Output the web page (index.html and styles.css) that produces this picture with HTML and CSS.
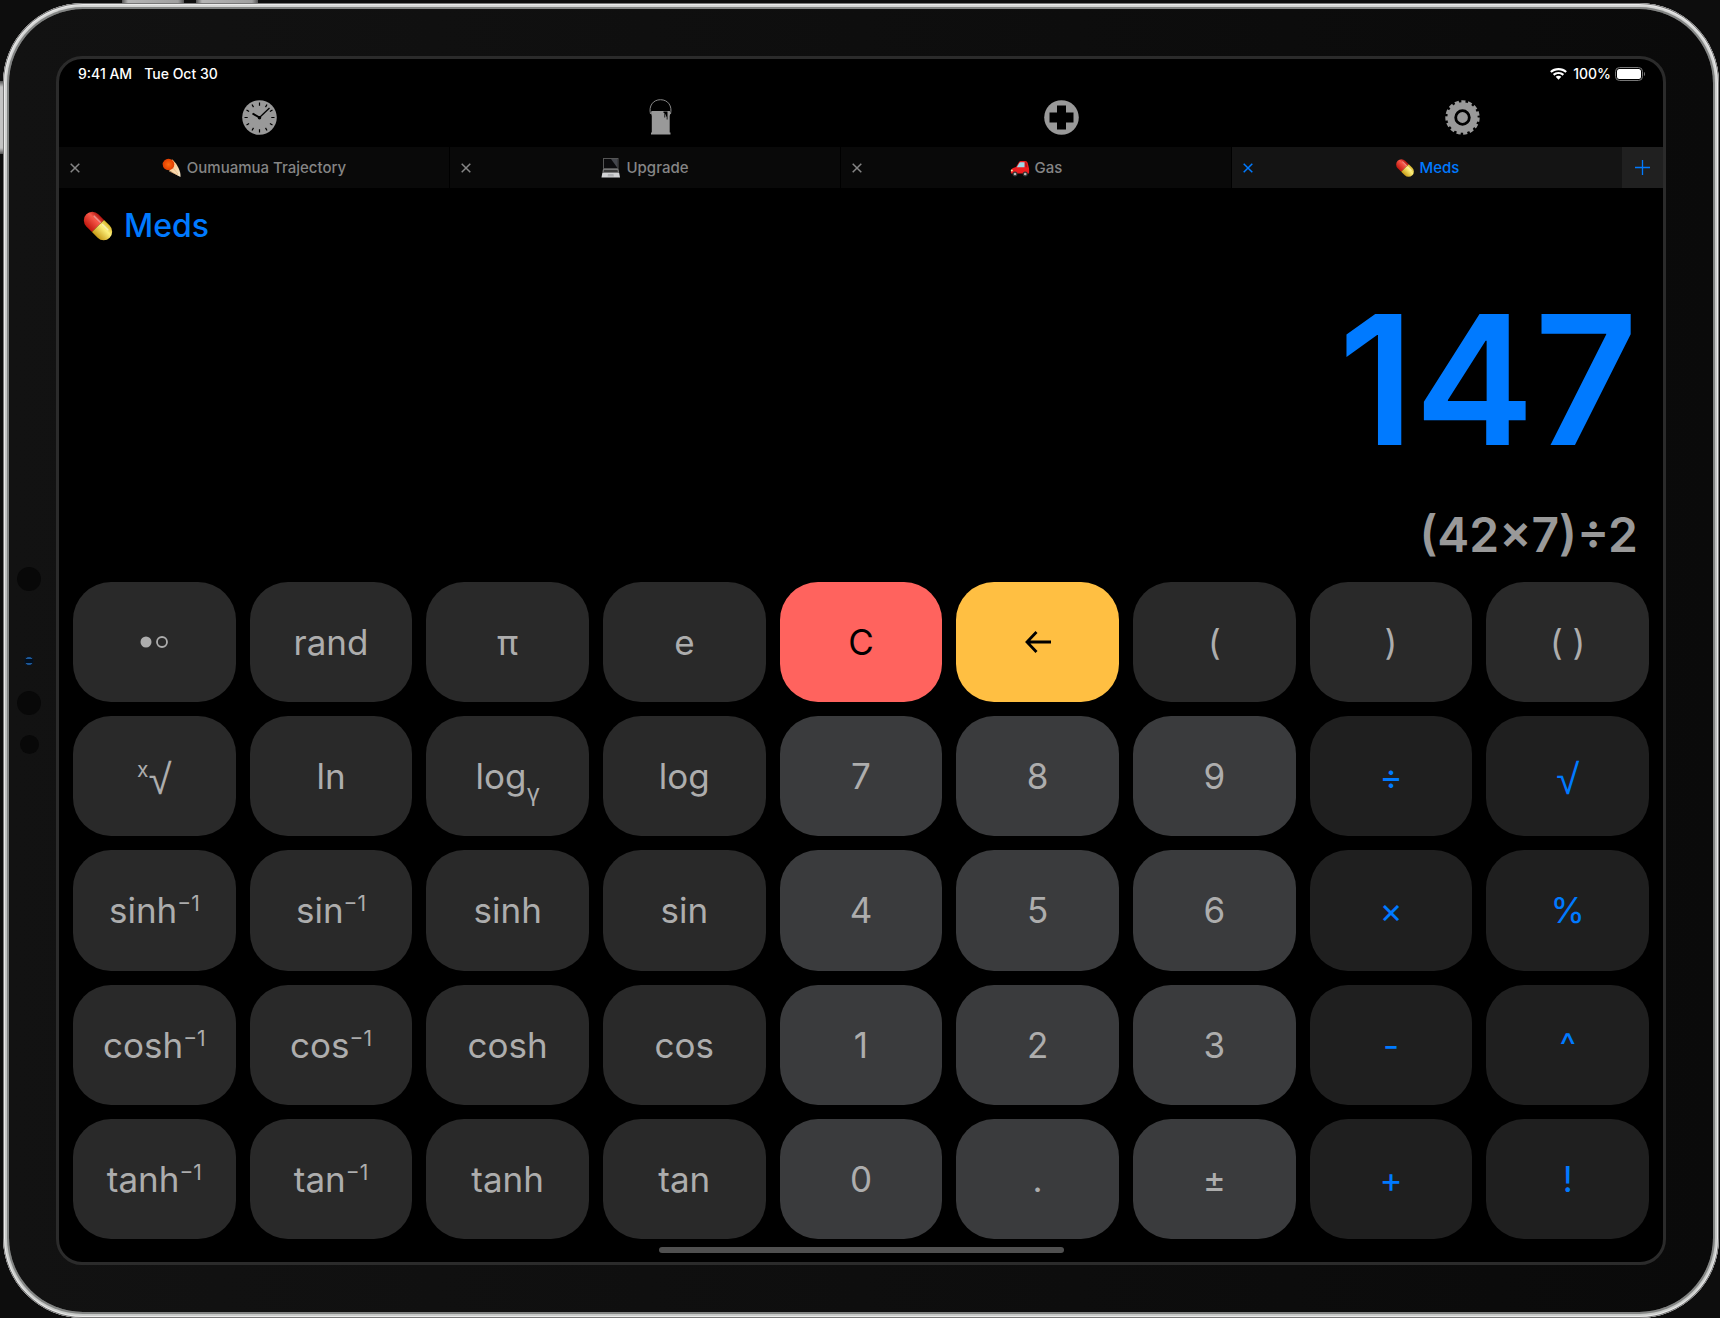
FILE: index.html
```html
<!DOCTYPE html>
<html lang="en">
<head>
<meta charset="utf-8">
<title>Calculator</title>
<link rel="stylesheet" href="styles.css">
</head>
<body>
<svg class="defs" aria-hidden="true">
  <defs>
    <linearGradient id="pillRed" x1="0" y1="0" x2="0" y2="1"><stop offset="0" stop-color="#b01510"/><stop offset=".35" stop-color="#f8594a"/><stop offset="1" stop-color="#c0160d"/></linearGradient>
    <linearGradient id="pillYellow" x1="0" y1="0" x2="0" y2="1"><stop offset="0" stop-color="#d8b52c"/><stop offset=".35" stop-color="#fdf07a"/><stop offset="1" stop-color="#c79a16"/></linearGradient>
    <linearGradient id="tail" x1="0" y1="0" x2="1" y2="1"><stop offset="0" stop-color="#ff8a2a"/><stop offset=".5" stop-color="#fbd09a"/><stop offset="1" stop-color="#f6ead0"/></linearGradient>
    <radialGradient id="rock"><stop offset="0" stop-color="#ff6a10"/><stop offset="1" stop-color="#e03c00"/></radialGradient>
    <symbol id="pill" viewBox="0 0 30 30">
      <g transform="rotate(45 15 15)">
        <path d="M15 7H7.500a8 8 0 0 0 0 16H15Z" fill="url(#pillRed)"/>
        <path d="M15 7h7.500a8 8 0 0 1 0 16H15Z" fill="url(#pillYellow)"/>
        <path d="M6 11h8" stroke="#fff" stroke-opacity=".4" stroke-width="1.500" stroke-linecap="round"/>
        <path d="M17 11h7" stroke="#fff" stroke-opacity=".5" stroke-width="1.500" stroke-linecap="round"/>
      </g>
    </symbol>
    <symbol id="comet" viewBox="0 0 20 20">
      <path d="M.5 5C3 10 9 14 18.500 19C19 14 16 7 10.500 1.500Z" fill="url(#tail)"/>
      <path d="M7 13l9 4M11 10l5 6" stroke="#e9b27a" stroke-width=".7"/>
      <circle cx="6.500" cy="6.500" r="5.800" fill="url(#rock)"/>
    </symbol>
    <symbol id="laptop" viewBox="0 0 20 20">
      <path d="M2 0h15.500v11H2Z" fill="#555"/>
      <path d="M3 1h13.500v9H3Z" fill="#0c0c0e"/>
      <path d="M10 1h6.500v9Z" fill="#44464c"/>
      <path d="M2 11h15.500l.7 4H1.300Z" fill="#777"/>
      <path d="M3 12h13.500l.4 2H2.600Z" fill="#3a3a3a"/>
      <path d="M1.300 15h16.900l.8 4.500H.5Z" fill="#d2d3d5"/>
      <path d="M7 16h5.500l.4 2.500H6.600Z" fill="#b2b3b6"/>
    </symbol>
    <symbol id="car" viewBox="0 0 20 20">
      <path d="M1 15.500c-.6-2 .2-4.500 2-5.500l3-1 2.500-4C9 3.500 10 3 11.500 3H15c1.500 0 2.300.8 2.700 2l1 4c.6 1.800.5 4.500.3 6.500Z" fill="#ee1d1f"/>
      <path d="M6.800 9.200L9 5.500c.4-.8 1-1.200 2-1.200h3.500v4.900Z" fill="#9adbe8"/>
      <path d="M15 4.300c.8 0 1.300.4 1.500 1.200l.7 3.700H15.500Z" fill="#b01718"/>
      <circle cx="1.800" cy="12.500" r="1" fill="#ffe9a8"/>
      <circle cx="5" cy="16" r="2.500" fill="#333"/><circle cx="5" cy="16" r="1.300" fill="#bbb"/>
      <circle cx="15.200" cy="16" r="2.500" fill="#333"/><circle cx="15.200" cy="16" r="1.300" fill="#bbb"/>
    </symbol>
    <symbol id="close" viewBox="0 0 10 10">
      <path d="M.7.700l8.600 8.600M9.300.700L.7 9.300" fill="none" stroke="currentColor" stroke-width="1.500"/>
    </symbol>
  </defs>
</svg>

<div class="device">
  <span class="hardware volume-up"></span>
  <span class="hardware volume-down"></span>
  <span class="hardware power"></span>
  <div class="bezel">
    <span class="sensor sensor-a"></span>
    <span class="sensor camera"></span>
    <span class="sensor sensor-b"></span>
    <span class="sensor sensor-c"></span>

    <main class="screen">
      <div class="status">
        <div class="status-group"><span>9:41 AM</span><span>Tue Oct 30</span></div>
        <div class="status-group status-right">
          <svg width="17" height="12" viewBox="0 0 17 12" fill="#fff">
            <path d="M8.500 0C5.200 0 2.300 1.200.1 3.200l1.500 1.600C3.400 3.100 5.800 2.200 8.500 2.200s5.100.9 6.900 2.600l1.500-1.600C14.700 1.200 11.800 0 8.500 0Z"/>
            <path d="M8.500 3.900c-2.200 0-4.100.8-5.600 2.200l1.500 1.600c1.100-1 2.500-1.600 4.100-1.600s3 .6 4.100 1.600l1.500-1.600c-1.500-1.400-3.400-2.200-5.600-2.200Z"/>
            <path d="M8.500 7.700c-1.100 0-2.100.4-2.800 1.100l2.800 3 2.800-3c-.7-.7-1.700-1.100-2.800-1.100Z"/>
          </svg>
          <span>100%</span>
          <svg width="31" height="14" viewBox="0 0 31 14">
            <rect x=".5" y=".5" width="27" height="13" rx="4" fill="none" stroke="#777"/>
            <rect x="2" y="2" width="24" height="10" rx="2.500" fill="#fff"/>
            <path d="M29 5c1.300.4 1.300 3.600 0 4Z" fill="#777"/>
          </svg>
        </div>
      </div>

      <nav class="toolbar">
        <button class="tool" aria-label="History">
          <svg width="35" height="35" viewBox="0 0 35 35">
            <circle cx="17.500" cy="17.500" r="17.300" fill="#999"/>
            <g stroke="#000" stroke-width="1.200">
              <path d="M17.500 2.500v3.200M17.500 29.300v3.200M2.500 17.500h3.200M29.300 17.500h3.200"/>
              <path d="M10 4.500l1.500 2.600M25 4.500l-1.500 2.600M4.500 10l2.600 1.500M30.500 10l-2.600 1.500M4.500 25l2.600-1.500M30.500 25l-2.600-1.500M10 30.500l1.500-2.600M25 30.500l-1.500-2.600"/>
            </g>
            <path d="M17.500 17.500L10.500 13.500" stroke="#000" stroke-width="2"/>
            <path d="M17.500 17.500L27.500 8" stroke="#000" stroke-width="1.300"/>
            <circle cx="17.500" cy="17.700" r="1.800"/>
          </svg>
        </button>
        <button class="tool" aria-label="Theme">
          <svg width="35" height="36" viewBox="0 0 35 36">
            <path d="M7.500 15C5.500 7 10 .7 17.500.7S29.500 7 27.500 15" fill="none" stroke="#888" stroke-width="1"/>
            <path d="M8.500 12h18.300l.7 2-.8 3V33.500h.8V35.500H8V33.500h.8V17L8 14Z" fill="#999"/>
            <path d="M20.500 12.500h4v8h-.8v-3h-.8v-2h-.7v3h-.8v-4.500h-.9Z" fill="#000"/>
          </svg>
        </button>
        <button class="tool" aria-label="Add">
          <svg width="35" height="35" viewBox="0 0 35 35">
            <circle cx="17.500" cy="17.500" r="17.300" fill="#999"/>
            <path d="M13 5.500h9v7h7.500v10H22v7h-9v-7H5.500v-10H13Z" fill="#000"/>
          </svg>
        </button>
        <button class="tool" aria-label="Settings">
          <svg width="35" height="35" viewBox="0 0 35 35">
            <circle cx="17.500" cy="17.500" r="15.200" fill="#999"/>
            <circle cx="17.500" cy="17.500" r="15.400" fill="none" stroke="#999" stroke-width="3.600" stroke-dasharray="4.050 2.400"/>
            <circle cx="17.500" cy="17.500" r="6.800" fill="none" stroke="#000" stroke-width="2.800"/>
          </svg>
        </button>
      </nav>

      <div class="tabs">
        <div class="tab"><button class="tab-close" aria-label="Close Oumuamua Trajectory"><svg width="10" height="10"><use href="#close"/></svg></button><button class="tab-title"><svg width="20" height="20"><use href="#comet"/></svg>Oumuamua Trajectory</button></div>
        <div class="tab"><button class="tab-close" aria-label="Close Upgrade"><svg width="10" height="10"><use href="#close"/></svg></button><button class="tab-title"><svg width="20" height="20"><use href="#laptop"/></svg>Upgrade</button></div>
        <div class="tab"><button class="tab-close" aria-label="Close Gas"><svg width="10" height="10"><use href="#close"/></svg></button><button class="tab-title"><svg width="20" height="20"><use href="#car"/></svg>Gas</button></div>
        <div class="tab active"><button class="tab-close" aria-label="Close Meds"><svg width="10" height="10"><use href="#close"/></svg></button><button class="tab-title"><svg width="20" height="20"><use href="#pill"/></svg>Meds</button></div>
        <button class="tab-add" aria-label="New tab"><svg width="15" height="15" viewBox="0 0 15 15"><path d="M7.500 0v15M0 7.500h15" stroke="currentColor" stroke-width="1.300"/></svg></button>
      </div>

      <section class="display">
        <h1 class="title"><svg width="32" height="32"><use href="#pill"/></svg>Meds</h1>
        <output class="result">147</output>
        <p class="expression">(42×7)÷2</p>
      </section>

      <div class="keypad">
        <button class="key" aria-label="More functions"><svg width="28" height="12" viewBox="0 0 28 12"><circle cx="6" cy="6" r="5.500" fill="currentColor"/><circle cx="22" cy="6" r="5" fill="none" stroke="currentColor" stroke-width="1.800"/></svg></button>
        <button class="key">rand</button>
        <button class="key">π</button>
        <button class="key">e</button>
        <button class="key clear">C</button>
        <button class="key delete" aria-label="Delete"><svg width="26" height="22" viewBox="0 0 26 22"><path d="M26 11H2M11.500 1L2 11l9.500 10" fill="none" stroke="currentColor" stroke-width="2.800"/></svg></button>
        <button class="key">(</button>
        <button class="key">)</button>
        <button class="key">( )</button>

        <button class="key"><span><sup>x</sup><span class="root">√</span></span></button>
        <button class="key">ln</button>
        <button class="key"><span>log<sub>γ</sub></span></button>
        <button class="key">log</button>
        <button class="key digit">7</button>
        <button class="key digit">8</button>
        <button class="key digit">9</button>
        <button class="key operator">÷</button>
        <button class="key operator"><span><span class="root">√</span></span></button>

        <button class="key"><span>sinh<sup>−1</sup></span></button>
        <button class="key"><span>sin<sup>−1</sup></span></button>
        <button class="key">sinh</button>
        <button class="key">sin</button>
        <button class="key digit">4</button>
        <button class="key digit">5</button>
        <button class="key digit">6</button>
        <button class="key operator">×</button>
        <button class="key operator">%</button>

        <button class="key"><span>cosh<sup>−1</sup></span></button>
        <button class="key"><span>cos<sup>−1</sup></span></button>
        <button class="key">cosh</button>
        <button class="key">cos</button>
        <button class="key digit">1</button>
        <button class="key digit">2</button>
        <button class="key digit">3</button>
        <button class="key operator">-</button>
        <button class="key operator">^</button>

        <button class="key"><span>tanh<sup>−1</sup></span></button>
        <button class="key"><span>tan<sup>−1</sup></span></button>
        <button class="key">tanh</button>
        <button class="key">tan</button>
        <button class="key digit">0</button>
        <button class="key digit">.</button>
        <button class="key digit">±</button>
        <button class="key operator">+</button>
        <button class="key operator">!</button>
      </div>
      <div class="home"><span class="home-bar"></span></div>
    </main>
  </div>
</div>
</body>
</html>
```
FILE: styles.css
```css
* { box-sizing: border-box; }

body {
  margin: 0;
  min-height: 100vh;
  display: flex;
  padding: 3px 1px 0 3px;
  background: #0d0d0d;
  font-family: Inter, "Liberation Sans", sans-serif;
}

button {
  margin: 0;
  padding: 0;
  border: 0;
  background: none;
  color: inherit;
  font: inherit;
  cursor: pointer;
}

.defs { position: absolute; width: 0; height: 0; }

/* tablet body */
.device {
  position: relative;
  flex: 1;
  display: flex;
  padding: 6px;
  border-radius: 80px;
  background: linear-gradient(#d4d5d4, #b9bbba 50%, #c8cac8);
  box-shadow: inset 0 0 0 1px #777, inset 0 0 1px 2px #eee;
}

.bezel {
  position: relative;
  flex: 1;
  display: flex;
  padding: 47px;
  border-radius: 74px;
  background: linear-gradient(90deg, #121212, #0a0a0a);
  box-shadow: 0 0 0 2px #828483;
}

.hardware {
  position: absolute;
  background: linear-gradient(90deg, #555, #b5b5b5 6px, #a0a0a0 calc(100% - 6px), #555);
}
.volume-up { top: -3px; left: 119px; width: 62px; height: 3px; }
.volume-down { top: -3px; left: 193px; width: 62px; height: 3px; }
.power { top: 78px; left: -3px; width: 3px; height: 73px; background: linear-gradient(#555, #c4c4c4 6px, #c4c4c4 calc(100% - 6px), #555); }

.sensor {
  position: absolute;
  left: 8px;
  width: 24px;
  height: 24px;
  border-radius: 50%;
  background: #080808;
}
.sensor-a { top: calc(50% - 94px); }
.camera {
  top: calc(50% - 5px);
  left: 15px;
  width: 10px;
  height: 10px;
  border: 1px solid #0b1420;
  background: linear-gradient(#1d5a9c 0 2px, #03101f 2px 6px, #1d5a9c 6px);
}
.sensor-b { top: calc(50% + 30px); }
.sensor-c { top: calc(50% + 74px); left: 11px; width: 19px; height: 19px; }

.screen {
  flex: 1;
  display: flex;
  flex-direction: column;
  min-width: 0;
  border: 3px solid #2b2b2b;
  border-radius: 26px;
  background: #000;
  overflow: hidden;
}

.status {
  display: flex;
  justify-content: space-between;
  padding: 5px 17px 0 19px;
  color: #fff;
  font-size: 14px;
  font-weight: 500;
  line-height: 20px;
}
.status-group { display: flex; align-items: center; gap: 12px; }
.status-right { gap: 4px; }
.status-right span { padding-left: 2px; }

.toolbar {
  display: grid;
  grid-template-columns: repeat(4, 1fr);
  height: 63px;
  padding-top: 3px;
}
.tool { display: flex; align-items: center; justify-content: center; }

.tabs { display: flex; height: 41px; color: #858585; }
.tab {
  flex: 1;
  display: grid;
  grid-template-columns: 32px 1fr 32px;
  border-right: 1px solid #000;
  background: #090909;
}
.tab-close { display: flex; align-items: center; justify-content: center; }
.tab-title {
  display: flex;
  align-items: center;
  justify-content: center;
  gap: 5px;
  font-size: 15px;
  font-weight: 500;
}
.tab.active { border-right: 0; background: #141414; color: #007aff; }
.tab-add {
  display: flex;
  align-items: center;
  justify-content: center;
  width: 41px;
  background: #202020;
  color: #007aff;
}

.display {
  display: flex;
  flex-direction: column;
  padding: 18px 25px 0 23px;
}
.title {
  display: flex;
  align-items: center;
  gap: 10px;
  margin: 0;
  color: #007aff;
  font-size: 32px;
  font-weight: 500;
  line-height: 40px;
}
.result {
  margin-top: 25px;
  color: #007aff;
  font-size: 180px;
  font-weight: 600;
  line-height: 218px;
  text-align: right;
}
.expression {
  margin: 16px 0 0;
  color: #999;
  font-size: 48px;
  font-weight: 600;
  line-height: 60px;
  text-align: right;
}

.keypad {
  flex: 1;
  display: grid;
  grid-template-columns: repeat(9, 1fr);
  grid-auto-rows: minmax(64px, 1fr);
  gap: 14px;
  padding: 17px 14px 0;
}
.key {
  display: flex;
  align-items: center;
  justify-content: center;
  border-radius: 38px;
  background: #292929;
  color: #adadad;
  font-size: 35px;
  line-height: 40px;
}
.key sup, .key sub { line-height: 0; }
.key sup { font-size: 21px; vertical-align: 12px; }
.key sub { font-size: 24px; vertical-align: -12px; }
.root {
  font-family: "Liberation Sans", sans-serif;
  font-size: 42px;
  line-height: 0;
  vertical-align: -5px;
}
.clear { background: #ff635e; color: #000; }
.delete { background: #ffbf42; color: #000; }
.digit { background: #3a3b3d; }
.operator { background: #1f1f1f; color: #007aff; }

.home { display: flex; justify-content: center; padding: 8px 0 9px; }
.home-bar { width: 405px; height: 6px; border-radius: 3px; background: #505050; }
```
